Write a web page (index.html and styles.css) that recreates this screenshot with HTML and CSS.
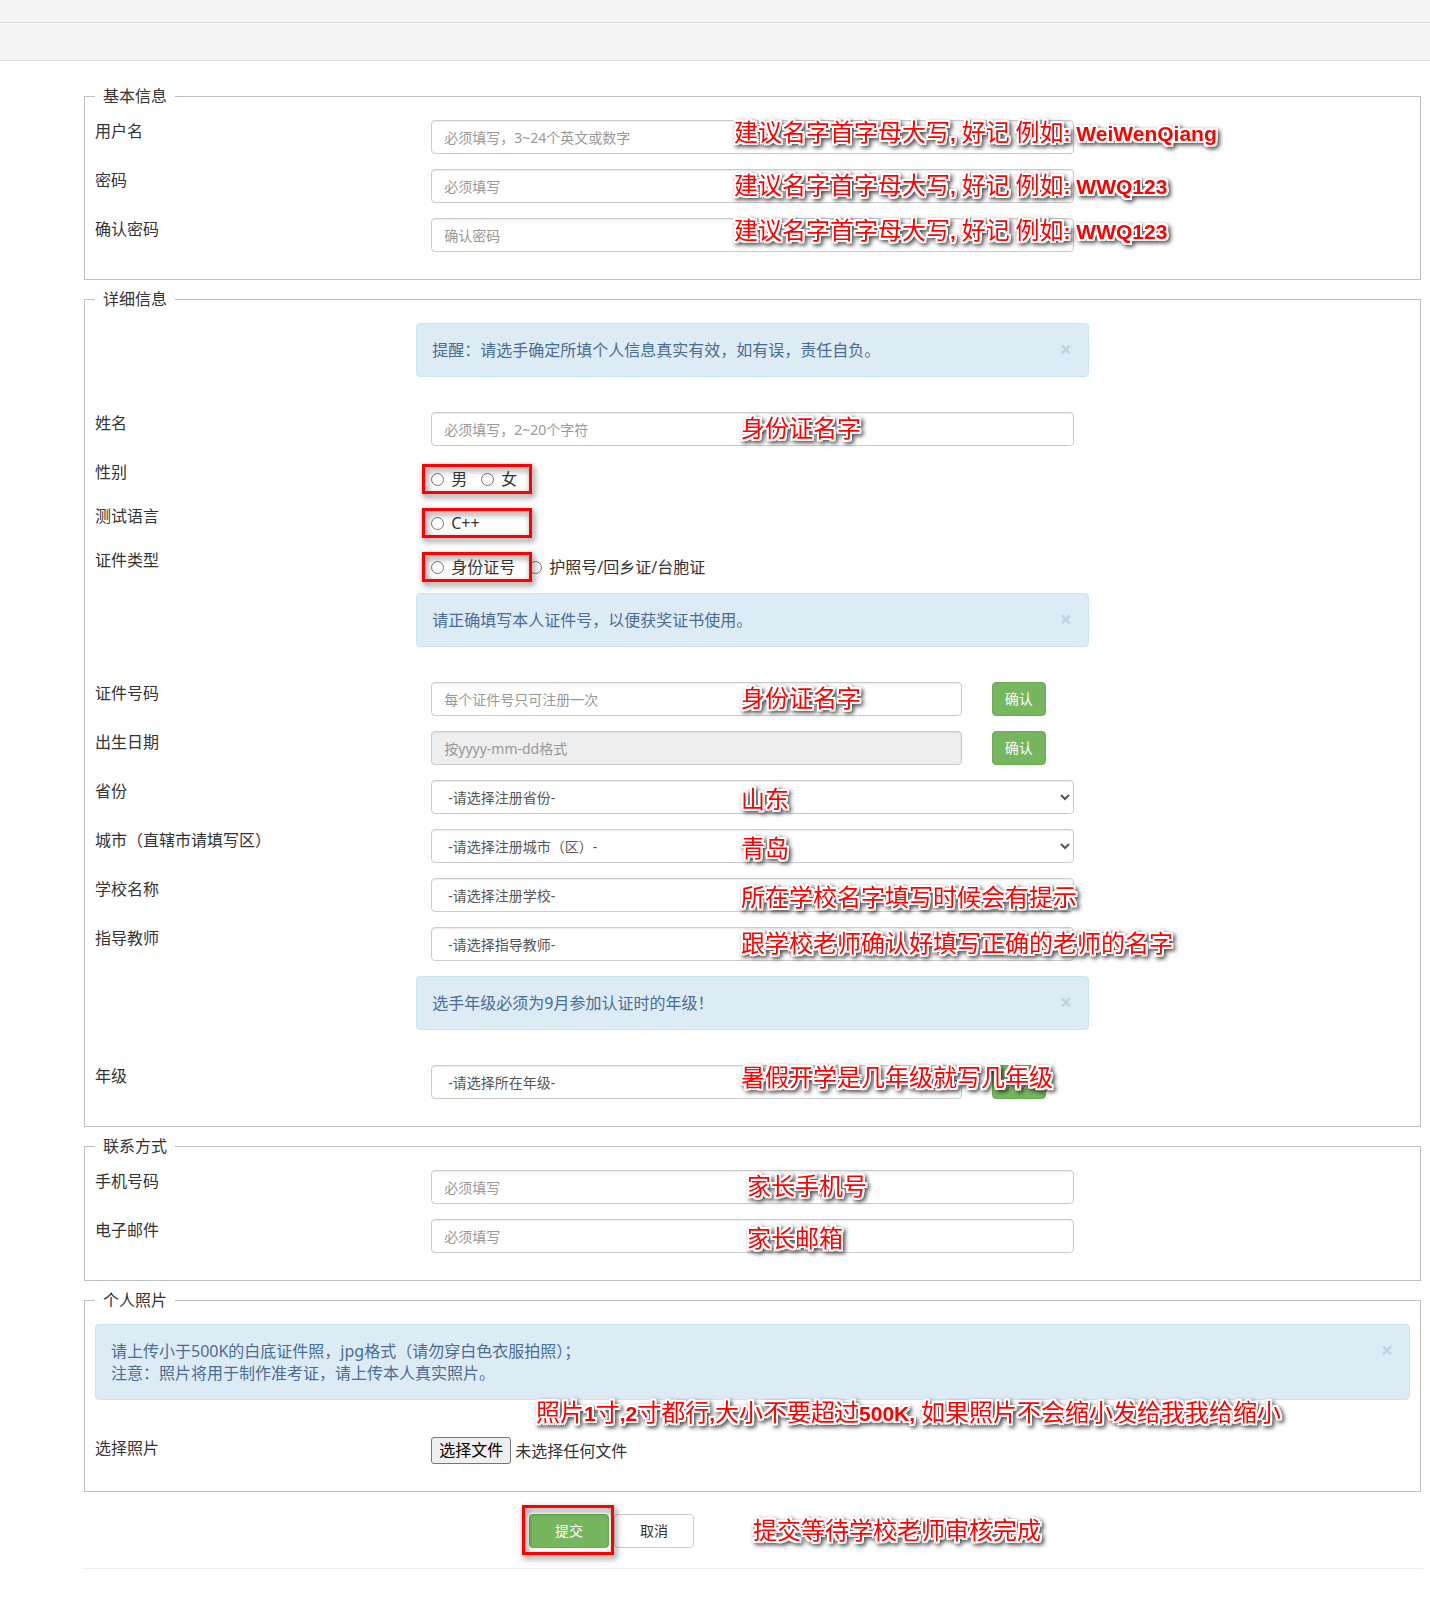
FILE: index.html
```html
<!DOCTYPE html>
<html lang="zh-CN">
<head>
  <meta charset="UTF-8">
  <meta name="viewport" content="width=device-width, initial-scale=1.0">
  <title>选手注册</title>
  <link rel="stylesheet" href="styles.css">
</head>
<body>
  <header class="top-bar"></header>
  <nav class="nav-bar"></nav>

  <main class="container">
    <form>
      <!-- 基本信息 -->
      <fieldset class="basic">
        <legend>基本信息</legend>
        <div class="row">
          <label class="row-label" for="username">用户名</label>
          <div class="field">
            <input class="control" id="username" type="text" placeholder="必须填写，3~24个英文或数字">
          </div>
          <div class="note note-high">建议名字首字母大写<b>, </b>好记<b> </b>例如<b>: WeiWenQiang</b></div>
        </div>
        <div class="row">
          <label class="row-label" for="password">密码</label>
          <div class="field">
            <input class="control" id="password" type="password" placeholder="必须填写">
          </div>
          <div class="note">建议名字首字母大写<b>, </b>好记<b> </b>例如<b>: WWQ123</b></div>
        </div>
        <div class="row">
          <label class="row-label" for="password2">确认密码</label>
          <div class="field">
            <input class="control" id="password2" type="password" placeholder="确认密码">
          </div>
          <div class="note note-high">建议名字首字母大写<b>, </b>好记<b> </b>例如<b>: WWQ123</b></div>
        </div>
      </fieldset>

      <!-- 详细信息 -->
      <fieldset class="detail">
        <legend>详细信息</legend>
        <div class="row">
          <div class="alert">
            <p>提醒：请选手确定所填个人信息真实有效，如有误，责任自负。</p>
            <button class="close" type="button" aria-label="关闭">×</button>
          </div>
        </div>
        <div class="row">
          <label class="row-label" for="realname">姓名</label>
          <div class="field">
            <input class="control" id="realname" type="text" placeholder="必须填写，2~20个字符">
          </div>
          <div class="note">身份证名字</div>
        </div>
        <div class="row">
          <span class="row-label" id="gender-label">性别</span>
          <div class="field radios" role="radiogroup" aria-labelledby="gender-label">
            <label><input type="radio" name="gender">男</label>
            <label><input type="radio" name="gender">女</label>
            <span class="mark"></span>
          </div>
        </div>
        <div class="row">
          <span class="row-label" id="lang-label">测试语言</span>
          <div class="field radios" role="radiogroup" aria-labelledby="lang-label">
            <label><input type="radio" name="lang">C++</label>
            <span class="mark"></span>
          </div>
        </div>
        <div class="row">
          <span class="row-label" id="idtype-label">证件类型</span>
          <div class="field radios" role="radiogroup" aria-labelledby="idtype-label">
            <label><input type="radio" name="idtype">身份证号</label>
            <label><input type="radio" name="idtype">护照号/回乡证/台胞证</label>
            <span class="mark"></span>
          </div>
        </div>
        <div class="row">
          <div class="alert">
            <p>请正确填写本人证件号，以便获奖证书使用。</p>
            <button class="close" type="button" aria-label="关闭">×</button>
          </div>
        </div>
        <div class="row">
          <label class="row-label" for="idno">证件号码</label>
          <div class="field field-short">
            <input class="control" id="idno" type="text" placeholder="每个证件号只可注册一次">
          </div>
          <div class="field-action"><button class="button primary" type="button">确认</button></div>
          <div class="note">身份证名字</div>
        </div>
        <div class="row">
          <label class="row-label" for="birthday">出生日期</label>
          <div class="field field-short">
            <input class="control" id="birthday" type="text" placeholder="按yyyy-mm-dd格式" disabled>
          </div>
          <div class="field-action"><button class="button primary" type="button">确认</button></div>
        </div>
        <div class="row">
          <label class="row-label" for="province">省份</label>
          <div class="field">
            <select class="control" id="province"><option>-请选择注册省份-</option></select>
          </div>
          <div class="note note-low">山东</div>
        </div>
        <div class="row">
          <label class="row-label" for="city">城市（直辖市请填写区）</label>
          <div class="field">
            <select class="control" id="city"><option>-请选择注册城市（区）-</option></select>
          </div>
          <div class="note note-low">青岛</div>
        </div>
        <div class="row">
          <label class="row-label" for="school">学校名称</label>
          <div class="field">
            <select class="control" id="school"><option>-请选择注册学校-</option></select>
          </div>
          <div class="note note-low">所在学校名字填写时候会有提示</div>
        </div>
        <div class="row">
          <label class="row-label" for="teacher">指导教师</label>
          <div class="field">
            <select class="control" id="teacher"><option>-请选择指导教师-</option></select>
          </div>
          <div class="note">跟学校老师确认好填写正确的老师的名字</div>
        </div>
        <div class="row">
          <div class="alert">
            <p>选手年级必须为9月参加认证时的年级！</p>
            <button class="close" type="button" aria-label="关闭">×</button>
          </div>
        </div>
        <div class="row">
          <label class="row-label" for="grade">年级</label>
          <div class="field field-short">
            <select class="control" id="grade"><option>-请选择所在年级-</option></select>
          </div>
          <div class="field-action"><button class="button primary" type="button">确认</button></div>
          <div class="note note-high">暑假开学是几年级就写几年级</div>
        </div>
      </fieldset>

      <!-- 联系方式 -->
      <fieldset class="contact">
        <legend>联系方式</legend>
        <div class="row">
          <label class="row-label" for="phone">手机号码</label>
          <div class="field">
            <input class="control" id="phone" type="tel" placeholder="必须填写">
          </div>
          <div class="note">家长手机号</div>
        </div>
        <div class="row">
          <label class="row-label" for="email">电子邮件</label>
          <div class="field">
            <input class="control" id="email" type="email" placeholder="必须填写">
          </div>
          <div class="note note-low">家长邮箱</div>
        </div>
      </fieldset>

      <!-- 个人照片 -->
      <fieldset class="photo">
        <legend>个人照片</legend>
        <div class="alert">
          <p>请上传小于500K的白底证件照，jpg格式（请勿穿白色衣服拍照）；<br>注意：照片将用于制作准考证，请上传本人真实照片。</p>
          <button class="close" type="button" aria-label="关闭">×</button>
          <div class="note">照片<b>1</b>寸<b>,2</b>寸都行<b>,</b>大小不要超过<b>500K, </b>如果照片不会缩小发给我我给缩小</div>
        </div>
        <div class="row">
          <span class="row-label">选择照片</span>
          <div class="field file-field">
            <input class="file-input" id="photo" type="file">
            <label class="file-button" for="photo">选择文件</label>
            <span>未选择任何文件</span>
          </div>
        </div>
      </fieldset>

      <div class="actions">
        <div class="submit-wrap">
          <button class="button primary wide" type="submit">提交</button>
          <span class="mark"></span>
        </div>
        <button class="button plain wide" type="reset">取消</button>
        <div class="note">提交等待学校老师审核完成</div>
      </div>
    </form>
    <hr>
  </main>
</body>
</html>
```
FILE: styles.css
```css
/* 通用 */
* {
  box-sizing: border-box;
}

body {
  margin: 0;
  font-family: "Noto Sans", "Noto Sans CJK SC", sans-serif;
  font-size: 16px;
  line-height: 22px;
  color: #333;
  background-color: #fff;
}

input, select, button {
  font-family: inherit;
}

p {
  margin: 0;
}

/* 顶部 */
.top-bar, .nav-bar {
  background-color: #f4f4f4;
  border-bottom: 1px solid #dcdcdc;
}

.top-bar {
  height: 23px;
}

.nav-bar {
  height: 38px;
}

.container {
  padding: 24px 7px 24px 82px;
}

/* 表单分组 */
fieldset {
  min-width: 0;
  margin: 0 2px 8px;
  padding: 13px 10px 12px;
  border: 1px solid #c0c0c0;
}

legend {
  padding: 0 8px;
}

.row {
  position: relative;
  display: grid;
  grid-template-columns: repeat(12, minmax(0, 1fr));
  align-items: start;
  margin: 0 -15px 15px;
}

.row-label {
  grid-column: span 3;
  padding: 0 15px;
}

.field {
  grid-column: span 6;
  padding: 0 15px;
}

.field-short {
  grid-column: span 5;
}

.field-action {
  grid-column: span 2;
  padding: 0 15px;
}

/* 输入框 */
.control {
  display: block;
  width: 100%;
  height: 34px;
  padding: 6px 12px;
  font-size: 14px;
  color: #555;
  background-color: #fff;
  border: 1px solid #ccc;
  border-radius: 4px;
  box-shadow: inset 0 1px 1px rgba(0, 0, 0, 0.08);
}

.control::placeholder {
  color: #999;
}

.control:disabled {
  background-color: #eee;
}

.control:focus {
  outline: none;
  border-color: #66afe9;
}

/* 单选 */
.radios {
  position: relative;
  display: flex;
  gap: 14px;
  padding-top: 7px;
}

.radios label {
  display: flex;
  align-items: center;
  gap: 7px;
}

.radios input {
  margin: 0;
}

/* 按钮 */
.button {
  display: block;
  height: 34px;
  padding: 0 12px 2px;
  font-size: 14px;
  border: 1px solid #ccc;
  border-radius: 4px;
  cursor: pointer;
}

.primary {
  color: #fff;
  background-color: #76b65f;
  border-color: #69ad51;
}

.plain {
  color: #333;
  background-color: #fff;
}

.wide {
  width: 80px;
}

/* 提示 */
.alert {
  position: relative;
  grid-column: 4 / span 6;
  display: flex;
  justify-content: space-between;
  align-items: flex-start;
  margin-bottom: 20px;
  padding: 15px;
  color: #4a6d94;
  background-color: #ddebf5;
  border: 1px solid #c9e7f0;
  border-radius: 4px;
}

.close {
  padding: 0 1px;
  font-size: 21px;
  font-weight: bold;
  line-height: 20px;
  color: #c0d2e1;
  background: none;
  border: none;
  cursor: pointer;
}

/* 文件 */
.file-field {
  position: relative;
  display: flex;
  align-items: center;
  gap: 4px;
}

.file-input {
  position: absolute;
  width: 80px;
  height: 27px;
  opacity: 0;
}

.file-button {
  padding: 1px 7px 2px;
  color: #000;
  background-color: #efefef;
  border: 1px solid #767676;
  border-radius: 3px;
}

.photo .alert {
  margin-bottom: 37px;
}

/* 底部按钮 */
.actions {
  position: relative;
  display: flex;
  gap: 5px;
  margin: 22px 0 20px;
  padding-left: 33.3333%;
}

.submit-wrap {
  position: relative;
}

hr {
  margin: 0;
  border: 0;
  border-top: 1px solid #eee;
}

/* 红色批注 */
.note {
  position: absolute;
  top: 4px;
  left: 50%;
  font-size: 24px;
  line-height: 24px;
  white-space: pre;
  color: #f00;
  /* 白色描边加阴影 */
  filter: drop-shadow(2px 0 0 #fff) drop-shadow(-2px 0 0 #fff)
    drop-shadow(0 2px 0 #fff) drop-shadow(0 -2px 0 #fff)
    drop-shadow(2px 2px 2px rgba(0, 0, 0, 0.7));
  pointer-events: none;
}

.note b {
  font-family: "Liberation Sans", Arial, sans-serif;
  font-size: 21px;
}

.note-high {
  top: 0;
}

.note-low {
  top: 7px;
}

.basic .note {
  left: 654px;
}

.detail .note {
  left: 661px;
}

.contact .note {
  left: 667px;
}

.photo .note {
  top: 75px;
  left: 440px;
}

.actions .note {
  left: 671px;
}

/* 红色方框 */
.mark {
  position: absolute;
  top: 3px;
  left: 6px;
  width: 110px;
  height: 30px;
  border: 3px solid #f00;
  filter: drop-shadow(2px 3px 3px rgba(0, 0, 0, 0.6));
  pointer-events: none;
}

.submit-wrap .mark {
  top: -9px;
  left: -7px;
  width: 92px;
  height: 50px;
}
```
